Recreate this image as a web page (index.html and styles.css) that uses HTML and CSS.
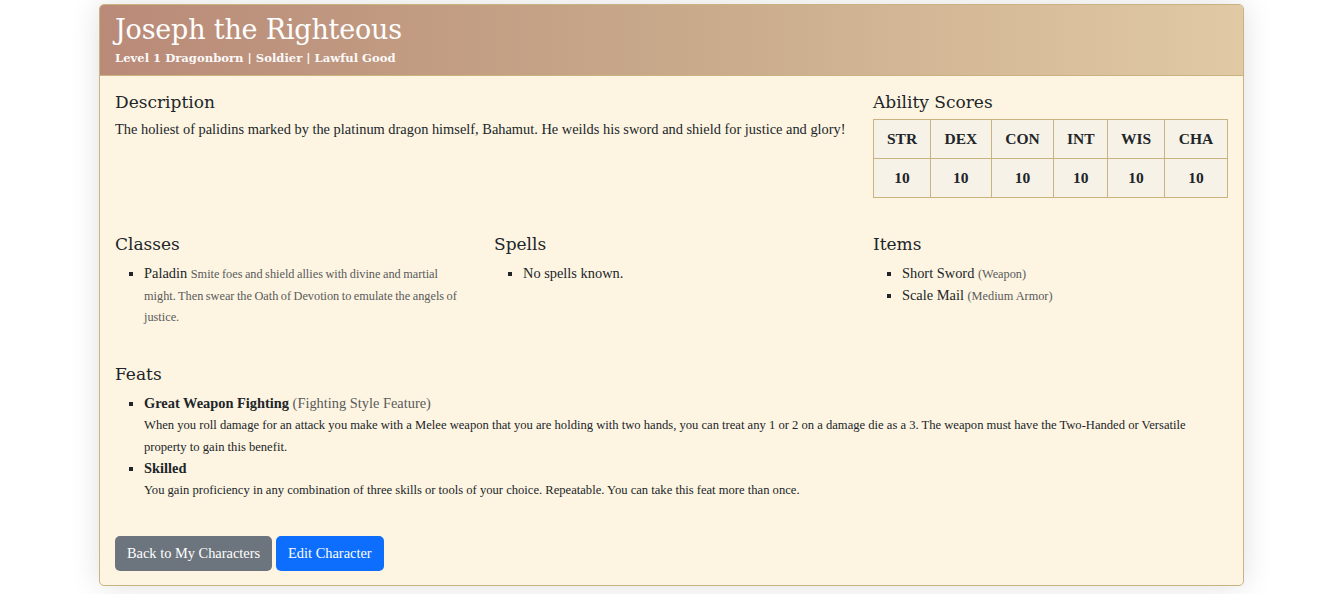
FILE: index.html
```html
<!DOCTYPE html>
<html lang="en">
<head>
<meta charset="utf-8">
<title>Joseph the Righteous</title>
<link rel="stylesheet" href="styles.css">
</head>
<body>
<div class="page">
  <div class="card">
    <div class="card-header">
      <h1 class="title">Joseph the Righteous</h1>
      <div class="subtitle">Level 1 Dragonborn | Soldier | Lawful Good</div>
    </div>
    <div class="card-body">
      <div class="row">
        <div class="col col-8">
          <h2 class="heading">Description</h2>
          <p class="desc">The holiest of palidins marked by the platinum dragon himself, Bahamut. He weilds his sword and shield for justice and glory!</p>
        </div>
        <div class="col col-4">
          <h2 class="heading">Ability Scores</h2>
          <table class="scores">
            <thead>
              <tr><th>STR</th><th>DEX</th><th>CON</th><th>INT</th><th>WIS</th><th>CHA</th></tr>
            </thead>
            <tbody>
              <tr><td>10</td><td>10</td><td>10</td><td>10</td><td>10</td><td>10</td></tr>
            </tbody>
          </table>
        </div>
      </div>
      <div class="row">
        <div class="col col-4">
          <h2 class="heading">Classes</h2>
          <ul class="list">
            <li>Paladin <span class="muted small class-desc">Smite foes and shield allies with divine and martial might. Then swear the Oath of Devotion to emulate the angels of justice.</span></li>
          </ul>
        </div>
        <div class="col col-4">
          <h2 class="heading">Spells</h2>
          <ul class="list">
            <li>No spells known.</li>
          </ul>
        </div>
        <div class="col col-4">
          <h2 class="heading">Items</h2>
          <ul class="list">
            <li>Short Sword <span class="muted small">(Weapon)</span></li>
            <li>Scale Mail <span class="muted small">(Medium Armor)</span></li>
          </ul>
        </div>
      </div>
      <div class="row row-last">
        <div class="col col-12">
          <h2 class="heading">Feats</h2>
          <ul class="list">
            <li><strong>Great Weapon Fighting</strong> <span class="muted">(Fighting Style Feature)</span>
              <div class="feat-desc">When you roll damage for an attack you make with a Melee weapon that you are holding with two hands, you can treat any 1 or 2 on a damage die as a 3. The weapon must have the Two-Handed or Versatile property to gain this benefit.</div>
            </li>
            <li><strong>Skilled</strong>
              <div class="feat-desc">You gain proficiency in any combination of three skills or tools of your choice. Repeatable. You can take this feat more than once.</div>
            </li>
          </ul>
        </div>
      </div>
      <div class="actions">
        <a class="btn btn-secondary" href="#">Back to My Characters</a>
        <a class="btn btn-primary" href="#">Edit Character</a>
      </div>
    </div>
  </div>
</div>
</body>
</html>
```
FILE: styles.css
```css
* { box-sizing: border-box; }
html, body { margin: 0; padding: 0; background: #fff; }
body {
  font-family: "Liberation Serif", "Times New Roman", serif;
  font-size: 14.4px;
  line-height: 1.5;
  color: #212529;
}
.page {
  padding: 4px 0 20px 99px;
}
.card {
  width: 1145px;
  background: #fdf5e2;
  border: 1px solid #c9b47f;
  border-radius: 5px;
  box-shadow: 0 0 30px rgba(0, 0, 0, 0.13);
  overflow: hidden;
}
.card-header {
  background: linear-gradient(90deg, #b98a78 0%, #c8a98a 50%, #e1c9a5 100%);
  border-bottom: 1px solid #c9b47f;
  padding: 9px 15px 8px 15px;
  color: #fff;
}
.title {
  margin: 0;
  font-family: "DejaVu Serif", Georgia, serif;
  font-weight: 400;
  font-size: 27px;
  line-height: 1.2;
  letter-spacing: -0.2px;
}
.subtitle {
  margin-top: 3px;
  font-family: "DejaVu Serif", Georgia, serif;
  font-weight: 700;
  font-size: 11.6px;
  line-height: 18px;
  opacity: 0.95;
}
.card-body {
  padding: 16px 15px 14px 15px;
}
.row {
  display: flex;
  margin: 0 -12px 36px;
}
.row-last {
  margin-bottom: 35px;
}
.col {
  padding: 0 12px;
}
.col-4 { width: 33.3333%; }
.col-8 { width: 66.6667%; }
.col-12 { width: 100%; }
.heading {
  margin: 0 0 6px;
  font-family: "DejaVu Serif", Georgia, serif;
  font-weight: 400;
  font-size: 17px;
  line-height: 1.2;
  color: #212529;
}
.desc {
  margin: 0;
  font-size: 14.4px;
}
.scores {
  width: 100%;
  margin-top: 2px;
  border-collapse: collapse;
  background: #f7f2e7;
}
.scores th, .scores td {
  border: 1px solid #c9b47f;
  text-align: center;
  font-weight: 700;
  font-size: 15.5px;
  line-height: 22px;
  padding: 6px 6px;
  height: 39px;
}
.list {
  margin: 9px 0 0;
  padding-left: 29px;
  list-style: square;
}
.list li {
  line-height: 21.6px;
}
.muted { color: #5a5a5a; }
.small { font-size: 12.3px; line-height: 1; }
.class-desc { word-spacing: -0.6px; }
.feat-desc {
  font-size: 12.6px;
  line-height: 21.6px;
}
.actions {
  display: flex;
  gap: 4px;
}
.btn {
  display: inline-block;
  padding: 7px 12px;
  font-size: 14.4px;
  line-height: 21px;
  color: #fff;
  text-decoration: none;
  border-radius: 5px;
}
.btn-secondary { background: #6c757d; }
.btn-primary { background: #0d6efd; }
```
